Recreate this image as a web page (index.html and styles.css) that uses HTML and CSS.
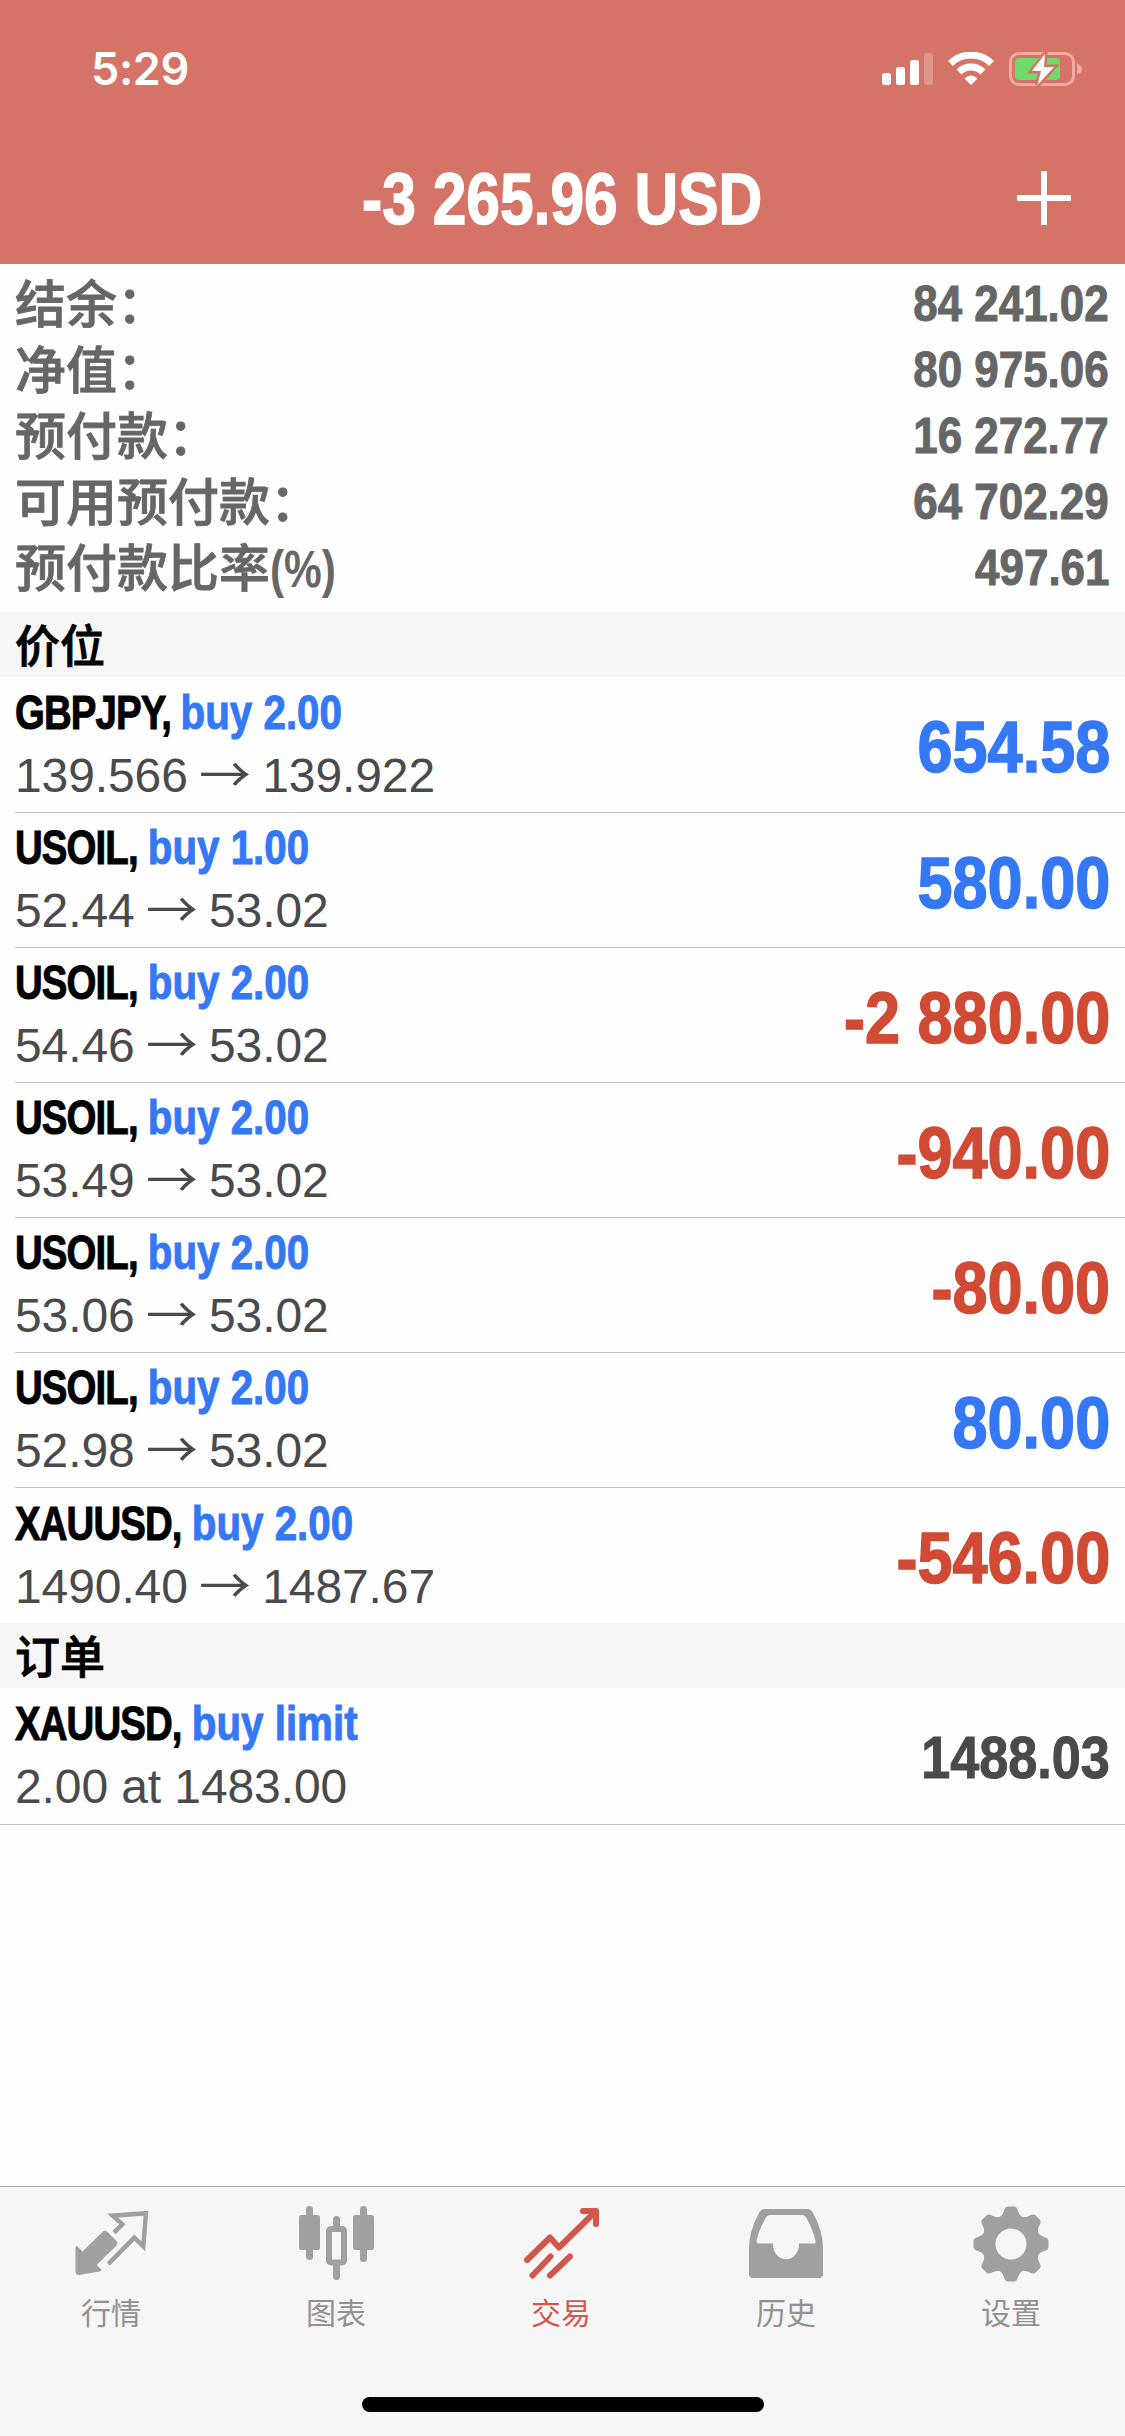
FILE: index.html
```html
<!DOCTYPE html>
<html lang="zh-CN">
<head>
<meta charset="utf-8">
<title>交易</title>
<link rel="stylesheet" href="styles.css">
</head>
<body>
<div class="app">
  <header class="top">
    <div class="status">
      <span class="time">5:29</span>
      <svg class="status-icons" viewBox="0 0 202 36" width="202" height="36">
        <g fill="#fff">
          <rect x="0" y="21" width="9" height="12" rx="2.5"/>
          <rect x="14" y="15" width="9" height="18" rx="2.5"/>
          <rect x="28" y="8" width="9" height="25" rx="2.5"/>
          <rect x="42" y="1" width="9" height="32" rx="2.5" opacity=".25"/>
        </g>
        <g fill="none" stroke="#fff" stroke-width="7">
          <path d="M68.500 11.500a29 29 0 0 1 41 0"/>
          <path d="M77 20a17 17 0 0 1 24 0"/>
        </g>
        <path fill="#fff" d="M82.500 26.500q6.500-6 13 0L89 33z"/>
        <rect x="128.500" y="1.500" width="63" height="31" rx="8.500" fill="none" stroke="#f3aaa3" stroke-width="3"/>
        <rect x="133" y="6" width="45" height="22" rx="4" fill="#6cdb69"/>
        <path d="M195 11.500q5 1.500 5 5.500t-5 5.500z" fill="#f3aaa3"/>
        <path d="M163 2 150 19h9l-3.500 14L172 15h-10z" fill="#fff" stroke="#d57466" stroke-width="5" paint-order="stroke"/>
      </svg>
    </div>
    <div class="title-bar">
      <h1 class="title">-3 265.96 USD</h1>
      <svg class="add" viewBox="0 0 54 54" width="54" height="54"><path d="M27 0v54M0 27h54" stroke="#fff" stroke-width="6"/></svg>
    </div>
  </header>

  <dl class="summary">
    <div class="sum-row"><dt>结余：</dt><dd class="num">84 241.02</dd></div>
    <div class="sum-row"><dt>净值：</dt><dd class="num">80 975.06</dd></div>
    <div class="sum-row"><dt>预付款：</dt><dd class="num">16 272.77</dd></div>
    <div class="sum-row"><dt>可用预付款：</dt><dd class="num">64 702.29</dd></div>
    <div class="sum-row"><dt>预付款比率<span class="unit">(%)</span></dt><dd class="num">497.61</dd></div>
  </dl>

  <h2 class="section">价位</h2>
  <ul class="list">
    <li class="row"><div class="info"><p class="name">GBPJPY, <b>buy 2.00</b></p><p class="price">139.566 <i>→</i> 139.922</p></div><span class="num profit up">654.58</span></li>
    <li class="row"><div class="info"><p class="name">USOIL, <b>buy 1.00</b></p><p class="price">52.44 <i>→</i> 53.02</p></div><span class="num profit up">580.00</span></li>
    <li class="row"><div class="info"><p class="name">USOIL, <b>buy 2.00</b></p><p class="price">54.46 <i>→</i> 53.02</p></div><span class="num profit down">-2 880.00</span></li>
    <li class="row"><div class="info"><p class="name">USOIL, <b>buy 2.00</b></p><p class="price">53.49 <i>→</i> 53.02</p></div><span class="num profit down">-940.00</span></li>
    <li class="row"><div class="info"><p class="name">USOIL, <b>buy 2.00</b></p><p class="price">53.06 <i>→</i> 53.02</p></div><span class="num profit down">-80.00</span></li>
    <li class="row"><div class="info"><p class="name">USOIL, <b>buy 2.00</b></p><p class="price">52.98 <i>→</i> 53.02</p></div><span class="num profit up">80.00</span></li>
    <li class="row"><div class="info"><p class="name">XAUUSD, <b>buy 2.00</b></p><p class="price">1490.40 <i>→</i> 1487.67</p></div><span class="num profit down">-546.00</span></li>
  </ul>

  <h2 class="section">订单</h2>
  <ul class="list orders">
    <li class="row"><div class="info"><p class="name">XAUUSD, <b>buy limit</b></p><p class="price">2.00 at 1483.00</p></div><span class="num quote">1488.03</span></li>
  </ul>

  <nav class="tabs">
    <a class="tab">
      <svg viewBox="0 0 76 76" width="76" height="76">
        <path d="M29.500 26q2.500-2.500 5 0l9 9q2 2 0 4.500L23.700 59l4 4q1.500 2.500-1 2.500L6 69q-3.500 0-3.500-3.500V42q0-3 2-1.500l5 5z" fill="#a0a0a0"/>
        <path d="M41 26.700l8.300-8.400-9.600-8.600L73 7.300l-2.700 33-9-8.600L35.300 58" fill="none" stroke="#a0a0a0" stroke-width="4.500"/>
      </svg>
      <span>行情</span>
    </a>
    <a class="tab">
      <svg viewBox="0 0 76 76" width="76" height="76">
        <g fill="#a0a0a0">
          <rect x="1" y="9" width="21" height="35" rx="2.500"/><rect x="8" y="0" width="7" height="54" rx="3.500"/>
          <rect x="55" y="9" width="21" height="35" rx="2.500"/><rect x="62" y="0" width="7" height="56" rx="3.500"/>
          <rect x="35" y="10" width="7" height="14" rx="3.500"/><rect x="35" y="55" width="7" height="19" rx="3.500"/>
        </g>
        <rect x="31" y="23" width="15" height="33.500" rx="2" fill="none" stroke="#a0a0a0" stroke-width="6"/>
      </svg>
      <span>图表</span>
    </a>
    <a class="tab active">
      <svg viewBox="0 0 76 76" width="76" height="76">
        <path fill="none" stroke="#d2564a" stroke-width="6" stroke-linecap="round" stroke-linejoin="round" d="M4 54 27 31.500l9 10L73 5M60 5h13v13M9.500 69.500l18-19M27 69.500l20-19"/>
      </svg>
      <span>交易</span>
    </a>
    <a class="tab">
      <svg viewBox="0 0 76 76" width="76" height="76">
        <path fill="#a0a0a0" fill-rule="evenodd" d="M17 3h42q4 0 6 4 10 18 10 36v25q0 4-4 4H5q-4 0-4-4V43Q1 25 11 7q2-4 6-4zM22 9q-3 0-5 4Q10 26 8.500 35q0 2.500 2 2.500H25c0 21 26 21 26 0h15q2 0 1.500-2.500Q66 26 59 13q-2-4-5-4z"/>
      </svg>
      <span>历史</span>
    </a>
    <a class="tab">
      <svg viewBox="0 0 76 76" width="76" height="76">
        <defs><path id="tooth" d="M26 12Q30 9 31 5 32 .5 35 .5h6q3 0 4 4.500 1 4 5 7z"/></defs>
        <circle cx="38" cy="38" r="22.500" fill="none" stroke="#a0a0a0" stroke-width="14"/>
        <g fill="#a0a0a0">
          <use href="#tooth"/>
          <use href="#tooth" transform="rotate(45 38 38)"/>
          <use href="#tooth" transform="rotate(90 38 38)"/>
          <use href="#tooth" transform="rotate(135 38 38)"/>
          <use href="#tooth" transform="rotate(180 38 38)"/>
          <use href="#tooth" transform="rotate(225 38 38)"/>
          <use href="#tooth" transform="rotate(270 38 38)"/>
          <use href="#tooth" transform="rotate(315 38 38)"/>
        </g>
      </svg>
      <span>设置</span>
    </a>
    <div class="home"></div>
  </nav>
</div>
</body>
</html>
```
FILE: styles.css
```css
* { box-sizing: border-box; margin: 0; padding: 0; }
body { background: #fefefe; font-family: "Liberation Sans", "Noto Sans CJK SC", sans-serif; }
.app { width: 1125px; height: 2436px; display: flex; flex-direction: column; overflow: hidden; }

.top { height: 264px; background: #d57466; color: #fff; }
.status { height: 132px; display: flex; justify-content: space-between; align-items: flex-start; padding: 44px 41px 0 91px; }
.time { font-family: Inter, sans-serif; font-weight: 600; font-size: 45px; line-height: 50px; letter-spacing: -.4px; }
.status-icons { margin-top: 8px; }
.title-bar { height: 132px; display: grid; grid-template-columns: 1fr auto 1fr; align-items: center; padding: 0 54px; }
.title { grid-column: 2; font-size: 72px; line-height: 80px; font-weight: bold; transform: scaleX(.84); margin: 2px -100px 0; white-space: nowrap; -webkit-text-stroke: 1.5px; }
.add { justify-self: end; }

.summary { height: 348px; padding: 7px 16px 0 15px; color: #666; }
.sum-row { height: 66px; display: flex; justify-content: space-between; align-items: center; }
.sum-row dt { font-family: "Noto Sans CJK SC", sans-serif; font-weight: 500; font-size: 51px; line-height: 66px; margin-top: -7px; -webkit-text-stroke: .8px; }
.unit { display: inline-block; font-family: "Liberation Sans", sans-serif; font-weight: bold; line-height: 1; transform: scaleX(.83); transform-origin: left; -webkit-text-stroke: 0; }
.num { font-weight: bold; transform: scaleX(.87); transform-origin: right; white-space: nowrap; -webkit-text-stroke: 1px; }
.sum-row .num { font-size: 50.5px; line-height: 66px; }

.section { height: 65px; flex: none; padding-left: 15px; background: #f6f6f6; color: #000; font-family: "Noto Sans CJK SC", sans-serif; font-size: 45px; line-height: 64px; font-weight: 500; -webkit-text-stroke: .8px; }
.list { list-style: none; padding-left: 15px; background: #fefefe; }
.row { height: 135px; display: flex; justify-content: space-between; align-items: center; padding-right: 15px; }
.row + .row { border-top: 1px solid #c4c4c6; }
.row:last-child { height: 136px; }
.info { display: flex; flex-direction: column; margin-top: -2px; }
.name { font-size: 48px; line-height: 63px; font-weight: bold; color: #000; white-space: nowrap; letter-spacing: -1.1px; transform: scaleX(.8); transform-origin: left; -webkit-text-stroke: 1px; }
.name b { display: inline-block; color: #3478f6; letter-spacing: 0; transform: scaleX(1.05); transform-origin: left; }
.price { font-size: 48px; line-height: 63px; color: #4a4a4c; white-space: nowrap; letter-spacing: -.1px; }
.price i { display: inline-block; font-style: normal; font-family: "Noto Sans CJK SC", sans-serif; line-height: 1; transform: scaleX(1.08); }
.profit { font-size: 72px; line-height: 80px; margin-top: 5px; -webkit-text-stroke: 1.5px; transform: scaleX(.875); }
.up { color: #3478f6; }
.down { color: #d04a34; }
.quote { font-size: 60px; color: #4a4a4c; margin-top: 3px; }
.orders { padding-left: 0; border-bottom: 1px solid #c4c4c6; }
.orders .row { padding-left: 15px; }

.tabs { position: relative; margin-top: auto; height: 250px; flex: none; display: grid; grid-template-columns: repeat(5, 225px); background: #f6f6f6; border-top: 1px solid #aaa; }
.tab { display: flex; flex-direction: column; align-items: center; padding: 19px 3px 0 0; color: #929292; }
.tab span { font-family: "Noto Sans CJK SC", sans-serif; font-size: 30px; line-height: 40px; margin-top: 9px; }
.tab.active { color: #d2564a; }
.home { position: absolute; left: 362px; bottom: 24px; width: 402px; height: 15px; border-radius: 8px; background: #000; }
```
